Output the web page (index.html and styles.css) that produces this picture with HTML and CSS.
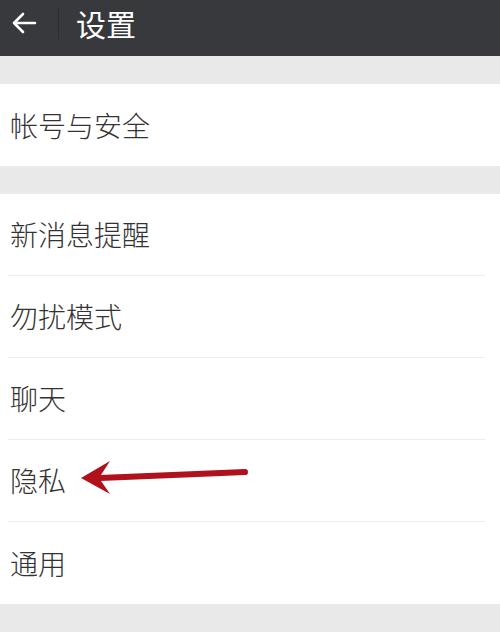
FILE: index.html
```html
<!DOCTYPE html>
<html lang="zh-CN">
<head>
    <meta charset="UTF-8">
    <meta name="viewport" content="width=device-width, initial-scale=1.0">
    <title>设置</title>
    <link rel="stylesheet" href="styles.css">
</head>
<body>
    <!-- Top Bar -->
    <div class="topbar">
        <svg class="back" width="26" height="24" viewBox="0 0 26 24">
            <path d="M24 12 H3 M12 3 L3 12 L12 21" fill="none" stroke="#fff" stroke-width="2.6" stroke-linecap="round" stroke-linejoin="round"/>
        </svg>
        <span class="topbar-line"></span>
        <span class="title">设置</span>
    </div>

    <div class="gap"></div>
    <div class="group">
        <div class="item">帐号与安全</div>
    </div>

    <div class="gap"></div>
    <div class="group">
        <div class="item">新消息提醒</div>
        <div class="item">勿扰模式</div>
        <div class="item">聊天</div>
        <div class="item marked">
            隐私
            <!-- Red pointer arrow -->
            <svg class="pointer" width="180" height="40" viewBox="0 0 180 40">
                <path d="M20 23 L165 17" stroke="#b0111a" stroke-width="6" stroke-linecap="round"/>
                <path d="M1 23 L30 6 L19 23 L30 39 Z" fill="#b0111a"/>
            </svg>
        </div>
        <div class="item">通用</div>
    </div>
    <div class="gap"></div>
</body>
</html>
```

FILE: styles.css
```css
body {
    margin: 0;
    background-color: #fff;
    font-family: "Noto Sans CJK SC", "Noto Sans", sans-serif;
    width: 500px;
}
.topbar {
    height: 56px;
    box-sizing: border-box;
    padding-top: 6px;
    background-color: #38393d;
    display: flex;
    align-items: flex-start;
}
.back {
    margin-left: 11px;
    margin-top: 5px;
}
.topbar-line {
    width: 1px;
    height: 32px;
    background-color: #2c2d30;
    margin-left: 21px;
    margin-top: 1px;
}
.title {
    color: #fff;
    font-size: 30px;
    line-height: 34px;
    margin-left: 17px;
}
.gap {
    height: 28px;
    background-color: #e9e9e9;
}
.gap:first-of-type {
    height: 29px;
}
.group {
    background-color: #fff;
    padding-left: 8px;
    padding-right: 15px;
}
.item {
    height: 81px;
    line-height: 81px;
    padding-left: 2px;
    font-size: 28px;
    font-weight: 300;
    color: #333;
    border-bottom: 1px solid #ececec;
    position: relative;
}
.group:first-of-type .item,
.item:last-child {
    border-bottom: none;
    height: 82px;
    line-height: 82px;
}
.pointer {
    position: absolute;
    left: 72px;
    top: 15px;
}
```
